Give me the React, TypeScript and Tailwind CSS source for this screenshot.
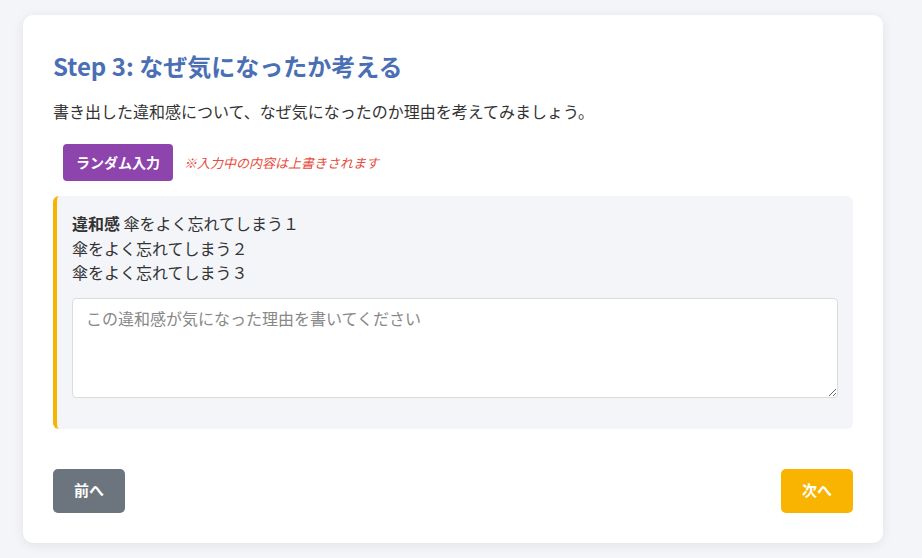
import React from "react";

export default function App() {
  return (
    <div
      className="min-h-[558px] w-[922px] bg-[#f4f5f9] pt-[15px] pb-[15px]"
      style={{ fontFamily: '"Noto Sans CJK JP", "Noto Sans", sans-serif' }}
    >
      <div className="ml-[23px] w-[860px] rounded-[10px] bg-white px-[30px] pt-[33px] pb-[30px] shadow-[0_2px_12px_rgba(0,0,0,0.08)]">
        <h2 className="text-[24px] font-bold leading-[36px] text-[#4a6fb5]">
          Step 3: なぜ気になったか考える
        </h2>
        <p className="mt-[15px] text-[16px] leading-[24px] text-[#333]">
          書き出した違和感について、なぜ気になったのか理由を考えてみましょう。
        </p>
        <div className="mt-[21px] ml-[10px] flex items-center gap-[11px]">
          <button className="h-[37px] w-[110px] rounded-[4px] bg-[#8e44ad] text-[14px] font-bold text-white">
            ランダム入力
          </button>
          <span className="text-[13px] italic text-[#e74c3c]">
            ※入力中の内容は上書きされます
          </span>
        </div>
        <div className="mt-[15px] rounded-[6px] border-l-4 border-[#f8b400] bg-[#f4f5f9] px-[15px] pt-[15px] pb-[31px]">
          <div className="text-[16px] leading-[24.5px] text-[#333]">
            <div>
              <span className="font-bold">違和感</span> 傘をよく忘れてしまう１
            </div>
            <div>傘をよく忘れてしまう２</div>
            <div>傘をよく忘れてしまう３</div>
          </div>
          <textarea
            className="mt-[13px] block h-[100px] w-full rounded-[4px] border border-[#dcdcdc] bg-white px-[13px] py-[7px] text-[16px] leading-[24px] text-[#333] placeholder:text-[#888]"
            placeholder="この違和感が気になった理由を書いてください"
          />
        </div>
        <div className="mt-[40px] flex justify-between">
          <button className="h-[44px] w-[72px] rounded-[5px] bg-[#6c757d] text-[15px] font-bold text-white">
            前へ
          </button>
          <button className="h-[44px] w-[72px] rounded-[5px] bg-[#f8b400] text-[15px] font-bold text-white">
            次へ
          </button>
        </div>
      </div>
    </div>
  );
}
